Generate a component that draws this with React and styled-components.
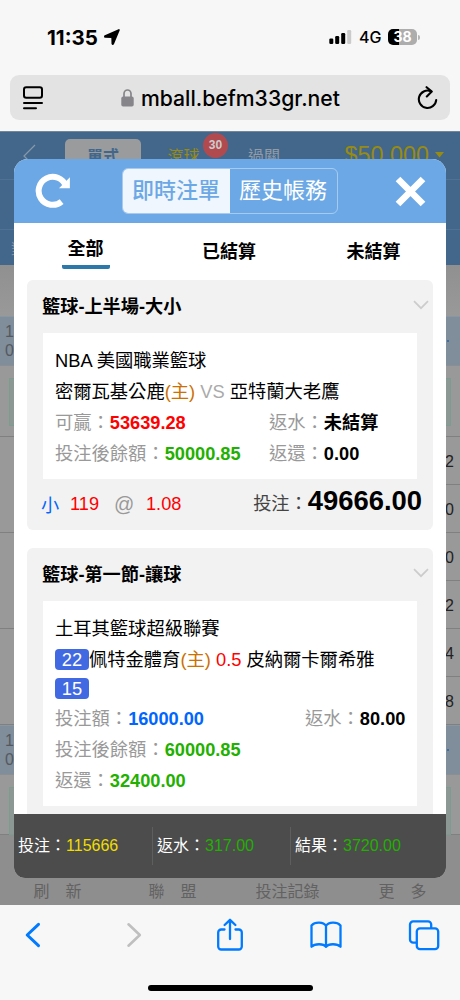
// src/App.jsx
import React, { useState } from 'react';
import styled, { createGlobalStyle } from 'styled-components';

const GlobalStyle = createGlobalStyle`
  * {
    box-sizing: border-box;
  }

  body {
    margin: 0;
    background: #f7f7f7;
    font-family: "Liberation Sans", "Noto Sans CJK TC", sans-serif;
  }

  svg {
    display: block;
    flex: none;
  }
`;

const Phone = styled.div`
  width: 460px;
  height: 1000px;
  display: flex;
  flex-direction: column;
  overflow: hidden;
  background: #f7f7f7;
`;

/* ---------- status bar + address bar ---------- */

const StatusBar = styled.div`
  height: 75px;
  display: flex;
  justify-content: space-between;
  align-items: flex-start;
  padding: 25px 40px 0 47px;
  font-family: Inter, sans-serif;
  color: #000;
`;

const StatusGroup = styled.div`
  display: flex;
  align-items: center;
  height: 24px;
`;

const Clock = styled.span`
  font-size: 20.5px;
  font-weight: 700;
  width: 57px;
  white-space: nowrap;
`;

const Network = styled.span`
  font-size: 16px;
  font-weight: 500;
  width: 29px;
  margin-left: 7px;
  white-space: nowrap;
`;

const Battery = styled.div`
  width: 29px;
  height: 16px;
  border-radius: 5px;
  background: linear-gradient(90deg, #000 38%, #adadad 38%);
  color: #fff;
  font-size: 14px;
  font-weight: 700;
  line-height: 16px;
  text-align: center;
`;

const BatteryTip = styled.div`
  width: 2px;
  height: 5px;
  margin-left: 1px;
  border-radius: 0 2px 2px 0;
  background: #b5b5b5;
`;

const AddressBar = styled.div`
  height: 45px;
  margin: 0 10px 11px;
  padding: 0 12px;
  display: flex;
  align-items: center;
  justify-content: space-between;
  border-radius: 9px;
  background: #e3e3e3;
`;

const Address = styled.div`
  display: flex;
  align-items: center;
  gap: 7px;
  font-family: Inter, sans-serif;
  font-size: 21.2px;
  font-weight: 500;
  color: #000;
`;

/* ---------- page under the modal ---------- */

const Page = styled.div`
  position: relative;
  height: 774px;
  overflow: hidden;
  display: flex;
  flex-direction: column;
  background: #999;
`;

const PageHeader = styled.div`
  height: 134px;
  background: #43678b;
  border-top: 1px solid #71879c;
`;

const PageNav = styled.div`
  height: 48px;
  display: grid;
  grid-template-columns: 65px 76px 85px 76px 1fr;
  align-items: center;
  padding-top: 1px;
  border-bottom: 1px solid #4f7193;
  font-size: 16px;
  color: #919ca7;
  text-align: center;
`;

const BackIcon = styled.svg`
  margin-left: 23px;
`;

const NavTab = styled.div`
  height: 34px;
  line-height: 35px;
  border-radius: 5px;
  background: ${(props) => (props.$active ? '#999b9d' : 'transparent')};
  color: ${(props) => (props.$active ? '#43678b' : props.$color || 'inherit')};
  font-weight: ${(props) => (props.$active ? 700 : 400)};
`;

const Balance = styled.div`
  display: flex;
  align-items: center;
  justify-content: flex-end;
  gap: 6px;
  padding: 0 16px 2px 0;
  font-size: 23.4px;
  color: #988b12;
`;

const PageNavLine = styled.div`
  height: 50px;
  border-bottom: 1px solid #4f7193;
`;

const PageNavLabel = styled.div`
  padding: 7px 0 0 11px;
  font-size: 15px;
  color: #8394a5;
`;

const LiveBadge = styled.div`
  position: absolute;
  left: 203px;
  top: 2px;
  width: 25px;
  height: 25px;
  border-radius: 50%;
  background: #b14a4f;
  color: #ccc;
  font-size: 12px;
  font-weight: 700;
  line-height: 25px;
  text-align: center;
`;

const Strip = styled.div`
  height: 51px;
  background: linear-gradient(#909090, #999);
`;

const DateBand = styled.div`
  height: 50px;
  display: flex;
  justify-content: space-between;
  padding: 5px 11px 0 5px;
  border-top: 1px solid #8a97a3;
  border-bottom: 1px solid #8a8f94;
  background: #808d9a;
  color: #55595e;
  font-size: 16px;
  line-height: 19px;
`;

const BandDash = styled.span`
  width: 2px;
  height: 2px;
  margin-top: 18px;
  background: #3f6f9e;
`;

const BoxRow = styled.div`
  height: ${(props) => props.$height}px;
  padding: 12px 9px 0;
  border-bottom: 1px solid #808080;
`;

const GreenBox = styled.div`
  height: 48px;
  border: 1px solid #7d9c90;
  background: #8c9893;
`;

const OddsRow = styled.div`
  height: 48px;
  display: flex;
  justify-content: space-between;
  align-items: stretch;
  color: #222;
  font-size: 16px;
  line-height: 50px;
`;

const OddsCell = styled.div`
  width: 200px;
  padding-right: 6px;
  text-align: right;
  border-bottom: 1px solid ${(props) => (props.$line ? '#808080' : 'transparent')};
`;

const PageFooter = styled.div`
  flex: 1;
  display: grid;
  grid-template-columns: repeat(4, 1fr);
  padding-top: 47px;
  background: #8e8e8e;
  color: #626262;
  font-size: 16px;
  line-height: 20px;
`;

const FooterItem = styled.div`
  display: flex;
  justify-content: center;
  gap: 16px;
`;

/* ---------- modal ---------- */

const Modal = styled.div`
  position: absolute;
  left: 14px;
  top: 28px;
  width: 432px;
  height: 719px;
  display: flex;
  flex-direction: column;
  border-radius: 14px 14px 11px 11px;
  overflow: hidden;
  background: #fff;
`;

const ModalHeader = styled.div`
  height: 64px;
  flex: none;
  display: flex;
  align-items: center;
  justify-content: space-between;
  padding: 0 20px 0 21px;
  background: #6ca8e5;
`;

const Segment = styled.div`
  display: flex;
  height: 46px;
  width: 216px;
  margin-right: 7px;
  border: 1px solid #a6cbf0;
  border-radius: 6px;
  overflow: hidden;
`;

const SegmentButton = styled.button`
  flex: 1;
  padding: 0;
  border: none;
  background: ${(props) => (props.$active ? '#f0f6fd' : 'transparent')};
  color: ${(props) => (props.$active ? '#6ca8e5' : '#fff')};
  font-family: inherit;
  font-size: 22px;
  font-weight: ${(props) => (props.$active ? 500 : 400)};
  line-height: 44px;
`;

const Tabs = styled.div`
  height: 57px;
  flex: none;
  display: grid;
  grid-template-columns: 143px 144px 145px;
  justify-items: center;
  align-items: start;
  padding-top: 10px;
`;

const Tab = styled.button`
  width: ${(props) => (props.$active ? '48px' : 'auto')};
  height: ${(props) => (props.$active ? '36px' : '37px')};
  padding: 0;
  border: none;
  border-bottom: ${(props) => (props.$active ? '4px solid #2b78a9' : 'none')};
  border-radius: 2px;
  background: none;
  font-family: inherit;
  font-size: 18px;
  font-weight: 700;
  line-height: 32px;
  color: #000;
`;

const List = styled.div`
  flex: 1;
  min-height: 0;
  overflow: hidden;
  display: flex;
  flex-direction: column;
  gap: 18px;
  padding: 0 13px;
`;

const Card = styled.div`
  flex: none;
  padding: 0 16px;
  border-radius: 6px;
  background: #f2f2f2;
`;

const CardTitle = styled.div`
  height: 52.5px;
  display: flex;
  align-items: center;
  justify-content: space-between;
  margin: 0 -12px 0 -1px;
  padding-bottom: 2px;
  font-size: 18.2px;
  font-weight: 700;
`;

const Details = styled.div`
  padding: 12px 11px 10.5px 12px;
  background: #fff;
  font-size: 18.3px;
  line-height: 31px;
  white-space: nowrap;
`;

const Line = styled.div`
  height: ${(props) => props.$height || 31}px;
  line-height: ${(props) => props.$height || 31}px;
`;

const Pair = styled(Line)`
  display: grid;
  grid-template-columns: ${(props) => props.$column}px 1fr;
`;

const Label = styled.span`
  color: #999;
`;

const Value = styled.span`
  color: ${(props) => props.$color || '#000'};
  font-size: 18.2px;
  font-weight: 700;
`;

const Tint = styled.span`
  color: ${(props) => props.$color};
`;

const Score = styled.span`
  display: inline-block;
  width: 34px;
  height: 21px;
  border-radius: 4px;
  background: #4169e1;
  color: #fff;
  font-size: 18.3px;
  line-height: 21px;
  text-align: center;
`;

const StakeRow = styled.div`
  height: 51px;
  display: flex;
  align-items: center;
  justify-content: space-between;
  margin: 0 -5px 0 -2px;
  font-size: 18.2px;
`;

const Odds = styled.div`
  display: flex;
  align-items: center;
  color: #f00;
`;

const Pick = styled.span`
  width: 29px;
  margin-top: -2px;
  color: #06f;
`;

const Handicap = styled.span`
  width: 44px;
`;

const At = styled.span`
  width: 32px;
  color: #999;
  font-size: 20px;
`;

const Stake = styled.div`
  display: flex;
  align-items: center;
  margin-top: -5px;
  color: #444;
`;

const StakeAmount = styled.strong`
  font-size: 27.4px;
  line-height: 40px;
  margin-bottom: 2px;
  color: #000;
`;

const Summary = styled.div`
  height: 64px;
  flex: none;
  display: grid;
  grid-template-columns: 139px 138px 1fr;
  align-items: center;
  background: #4c4c4c;
  color: #fff;
  font-size: 16px;
`;

const SummaryItem = styled.div`
  height: 38px;
  padding-left: 4px;
  line-height: 38px;
  white-space: nowrap;
  border-right: ${(props) => (props.$last ? 'none' : '1px solid #5e5e5e')};
`;

/* ---------- browser toolbar ---------- */

const Toolbar = styled.div`
  height: 60px;
  display: grid;
  grid-template-columns: 101.5px 90px 94.5px 97.5px 1fr;
  align-items: center;
  padding-left: 24px;
  color: #007aff;
`;

const HomeIndicator = styled.div`
  width: 165px;
  height: 6px;
  margin: 20px auto 0;
  border-radius: 3px;
  background: #000;
`;

const Chevron = () => (
  <svg width="16" height="10" viewBox="0 0 16 10" fill="none" stroke="#ccc" strokeWidth="1.7">
    <path d="M1 1.2 8 8.2 15 1.2" />
  </svg>
);

const oddsBlock = ['2', '0', '0', '2', '4', '8'];

const App = () => {
  const [view, setView] = useState('live');
  const [tab, setTab] = useState('全部');

  return (
    <>
      <GlobalStyle />
      <Phone>
        <StatusBar>
          <StatusGroup>
            <Clock>11:35</Clock>
            <svg width="16" height="16" viewBox="0 0 16 16">
              <path
                d="M14.9 1 9.1 14.9Q8.6 15.3 8.4 14.7L8.2 8.2 1.2 7.9Q.6 7.5 1.2 7.1Z"
                fill="#000"
                stroke="#000"
                strokeWidth="1.8"
                strokeLinejoin="round"
              />
            </svg>
          </StatusGroup>
          <StatusGroup>
            <svg width="23" height="14" viewBox="0 0 23 14">
              <rect x="0.3" y="8.5" width="4" height="5.5" rx="1.2" />
              <rect x="6.2" y="6" width="4" height="8" rx="1.2" />
              <rect x="12.2" y="3" width="4" height="11" rx="1.2" />
              <rect x="18.2" y="0" width="4" height="14" rx="1.2" fill="#cbcbcb" />
            </svg>
            <Network>4G</Network>
            <Battery>38</Battery>
            <BatteryTip />
          </StatusGroup>
        </StatusBar>

        <AddressBar>
          <svg width="22" height="24" viewBox="0 0 22 24" fill="none" stroke="#000" strokeWidth="2" strokeLinecap="round">
            <rect x="2" y="1.3" width="18" height="10.4" rx="2.2" />
            <path d="M2 17h18M2 22.2h12" />
          </svg>
          <Address>
            <svg width="13" height="18" viewBox="0 0 13 18">
              <path d="M3 9V4.8a3.5 3.8 0 0 1 7 0V9" fill="none" stroke="#85858a" strokeWidth="1.7" />
              <rect x="0.3" y="7.6" width="12.4" height="10" rx="1.8" fill="#85858a" />
            </svg>
            mball.befm33gr.net
          </Address>
          <svg width="21" height="24" viewBox="0 0 21 24" fill="none" stroke="#000" strokeWidth="2.1" strokeLinecap="round" strokeLinejoin="round">
            <path d="M13.8 5.2A8.7 8.7 0 1 0 19.2 14" />
            <path d="M9.6 1.2 14.8 5.6 9.8 10.4" />
          </svg>
        </AddressBar>

        <Page>
          <PageHeader>
            <PageNav>
              <BackIcon width="13" height="24" viewBox="0 0 13 24" fill="none" stroke="#8798a9" strokeWidth="1.2">
                <path d="M12 1 1 12 12 23" />
              </BackIcon>
              <NavTab $active>單式</NavTab>
              <NavTab $color="#988b12">滾球</NavTab>
              <NavTab>過關</NavTab>
              <Balance>
                $50,000
                <svg width="9" height="6" viewBox="0 0 9 6">
                  <path d="M0 0h9L4.5 5.5Z" fill="#988b12" />
                </svg>
              </Balance>
            </PageNav>
            <PageNavLine />
            <PageNavLabel>對</PageNavLabel>
          </PageHeader>
          <LiveBadge>30</LiveBadge>

          <Strip />
          <DateBand>
            <span>
              1
              <br />0
            </span>
            <BandDash />
          </DateBand>
          <BoxRow $height={71}>
            <GreenBox />
          </BoxRow>
          {oddsBlock.map((odd, i) => (
            <OddsRow key={i}>
              <OddsCell $line={i % 2 === 1} />
              <OddsCell $line>{odd}</OddsCell>
            </OddsRow>
          ))}
          <DateBand>
            <span>
              1
              <br />0
            </span>
            <BandDash />
          </DateBand>
          <BoxRow $height={60}>
            <GreenBox />
          </BoxRow>
          <PageFooter>
            <FooterItem>
              <span>刷</span>
              <span>新</span>
            </FooterItem>
            <FooterItem>
              <span>聯</span>
              <span>盟</span>
            </FooterItem>
            <FooterItem>投注記錄</FooterItem>
            <FooterItem>
              <span>更</span>
              <span>多</span>
            </FooterItem>
          </PageFooter>

          <Modal>
            <ModalHeader>
              <svg width="36" height="36" viewBox="0 0 36 36" fill="none">
                <path d="M30.8 13A14 14 0 1 0 26.6 28.6" stroke="#fff" strokeWidth="6" />
                <path d="M34.9 4.2V15.2H24Z" fill="#fff" />
              </svg>
              <Segment>
                <SegmentButton $active={view === 'live'} onClick={() => setView('live')}>
                  即時注單
                </SegmentButton>
                <SegmentButton $active={view === 'history'} onClick={() => setView('history')}>
                  歷史帳務
                </SegmentButton>
              </Segment>
              <svg width="31" height="31" viewBox="0 0 31 31" stroke="#fff" strokeWidth="6.6">
                <path d="M3 3 28 28M28 3 3 28" />
              </svg>
            </ModalHeader>

            <Tabs>
              {['全部', '已結算', '未結算'].map((name) => (
                <Tab key={name} $active={tab === name} onClick={() => setTab(name)}>
                  {name}
                </Tab>
              ))}
            </Tabs>

            <List>
              <Card>
                <CardTitle>
                  籃球-上半場-大小
                  <Chevron />
                </CardTitle>
                <Details>
                  <Line>NBA 美國職業籃球</Line>
                  <Line>
                    密爾瓦基公鹿<Tint $color="#cc7000">(主)</Tint> <Tint $color="#aaa">VS</Tint> 亞特蘭大老鷹
                  </Line>
                  <Pair $column={214}>
                    <span>
                      <Label>可贏：</Label>
                      <Value $color="#f00">53639.28</Value>
                    </span>
                    <span>
                      <Label>返水：</Label>
                      <Value>未結算</Value>
                    </span>
                  </Pair>
                  <Pair $column={214}>
                    <span>
                      <Label>投注後餘額：</Label>
                      <Value $color="#22b000">50000.85</Value>
                    </span>
                    <span>
                      <Label>返還：</Label>
                      <Value>0.00</Value>
                    </span>
                  </Pair>
                </Details>
                <StakeRow>
                  <Odds>
                    <Pick>小</Pick>
                    <Handicap>119</Handicap>
                    <At>@</At>
                    1.08
                  </Odds>
                  <Stake>
                    投注：<StakeAmount>49666.00</StakeAmount>
                  </Stake>
                </StakeRow>
              </Card>

              <Card>
                <CardTitle>
                  籃球-第一節-讓球
                  <Chevron />
                </CardTitle>
                <Details>
                  <Line>土耳其籃球超級聯賽</Line>
                  <Line>
                    <Score>22</Score>佩特金體育<Tint $color="#cc7000">(主)</Tint> <Tint $color="#f00">0.5</Tint> 皮納爾卡爾希雅
                  </Line>
                  <Line $height={28}>
                    <Score>15</Score>
                  </Line>
                  <Pair $column={250}>
                    <span>
                      <Label>投注額：</Label>
                      <Value $color="#06f">16000.00</Value>
                    </span>
                    <span>
                      <Label>返水：</Label>
                      <Value>80.00</Value>
                    </span>
                  </Pair>
                  <Line>
                    <Label>投注後餘額：</Label>
                    <Value $color="#22b000">60000.85</Value>
                  </Line>
                  <Line>
                    <Label>返還：</Label>
                    <Value $color="#22b000">32400.00</Value>
                  </Line>
                </Details>
                <StakeRow />
              </Card>
            </List>

            <Summary>
              <SummaryItem>
                投注：<Tint $color="#f0dc00">115666</Tint>
              </SummaryItem>
              <SummaryItem>
                返水：<Tint $color="#22b000">317.00</Tint>
              </SummaryItem>
              <SummaryItem $last>
                結果：<Tint $color="#22b000">3720.00</Tint>
              </SummaryItem>
            </Summary>
          </Modal>
        </Page>

        <Toolbar>
          <svg width="17" height="26" viewBox="0 0 17 26" fill="none" stroke="currentColor" strokeWidth="3" strokeLinecap="round" strokeLinejoin="round">
            <path d="M14.5 2.3 3.2 13 14.5 23.7" />
          </svg>
          <svg width="17" height="26" viewBox="0 0 17 26" fill="none" stroke="#bfbfbf" strokeWidth="2.6" strokeLinecap="round" strokeLinejoin="round">
            <path d="M2.5 2.3 13.8 13 2.5 23.7" />
          </svg>
          <svg width="28" height="34" viewBox="0 0 28 34" fill="none" stroke="currentColor" strokeWidth="2.3" strokeLinecap="round" strokeLinejoin="round">
            <path d="M8.5 11.5H5.2A3 3 0 0 0 2.2 14.5V28.5A3 3 0 0 0 5.2 31.5H22.8A3 3 0 0 0 25.8 28.5V14.5A3 3 0 0 0 22.8 11.5H19.5" />
            <path d="M14 21V2M8.6 7 14 1.8 19.4 7" />
          </svg>
          <svg width="32" height="28" viewBox="0 0 32 28" fill="none" stroke="currentColor" strokeWidth="2.3" strokeLinejoin="round">
            <path d="M16 5C13.5.8 5 .6 1.5 4.5V25.8C5 22.3 13.5 22.5 16 25.8 18.5 22.5 27 22.3 30.5 25.8V4.5C27 .6 18.5.8 16 5ZM16 5V25.8" />
          </svg>
          <svg width="32" height="31" viewBox="0 0 32 31" fill="none" stroke="currentColor" strokeWidth="2.3">
            <path d="M8.8 22.6H5.2A3.2 3.2 0 0 1 2 19.4V4.6A3.2 3.2 0 0 1 5.2 1.4H20A3.2 3.2 0 0 1 23.2 4.6V8" />
            <rect x="8.8" y="8.3" width="21.4" height="20.9" rx="3.2" />
          </svg>
        </Toolbar>
        <HomeIndicator />
      </Phone>
    </>
  );
};

export default App;
